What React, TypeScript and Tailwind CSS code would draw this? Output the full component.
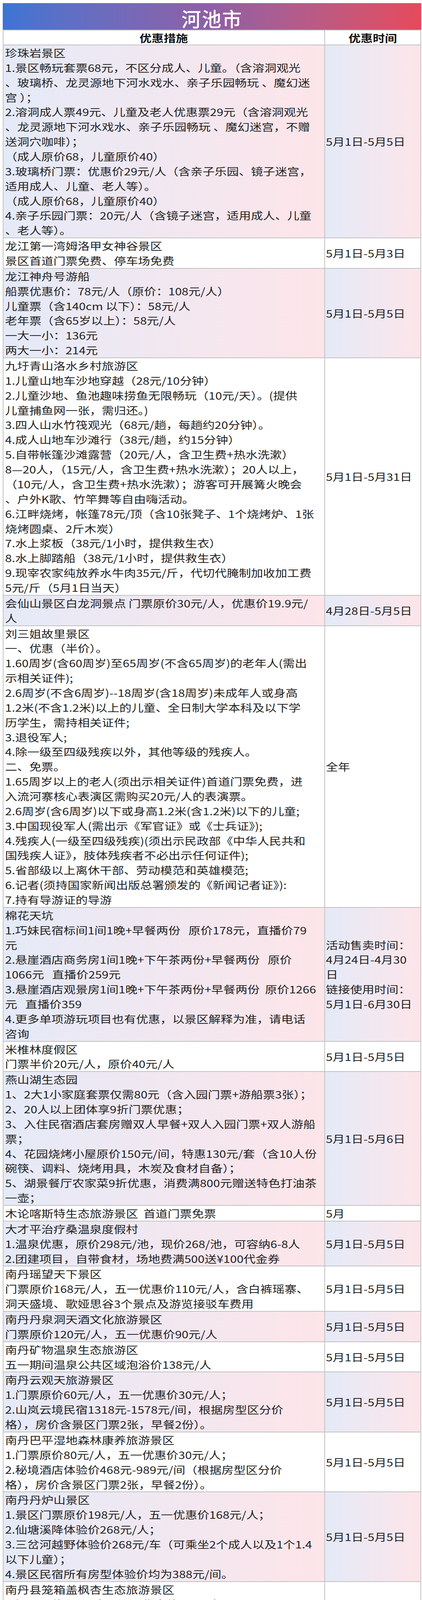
import React from 'react';

type Row = { lines: string[]; date: string[] };

const D5 = ['5月1日-5月5日'];

const rows: Row[] = [
  {
    lines: [
      '珍珠岩景区',
      '1.景区畅玩套票68元，不区分成人、儿童。（含溶洞观光',
      '、玻璃桥、龙灵源地下河水戏水、亲子乐园畅玩 、魔幻迷',
      '宫 ）；',
      '2.溶洞成人票49元、儿童及老人优惠票29元（含溶洞观光',
      '、龙灵源地下河水戏水、亲子乐园畅玩 、魔幻迷宫，不赠',
      '送洞穴咖啡）；',
      '（成人原价68，儿童原价40）',
      '3.玻璃桥门票：优惠价29元/人（含亲子乐园、镜子迷宫，',
      '适用成人、儿童、老人等）。',
      '（成人原价68，儿童原价40）',
      '4.亲子乐园门票：20元/人（含镜子迷宫，适用成人、儿童',
      '、老人等）。',
    ],
    date: D5,
  },
  {
    lines: ['龙江第一湾姆洛甲女神谷景区', '景区首道门票免费、停车场免费'],
    date: ['5月1日-5月3日'],
  },
  {
    lines: [
      '龙江神舟号游船',
      '船票优惠价：78元/人（原价：108元/人）',
      '儿童票（含140cm 以下）：58元/人',
      '老年票（含65岁以上）：58元/人',
      '一大一小：136元',
      '两大一小：214元',
    ],
    date: D5,
  },
  {
    lines: [
      '九圩青山洛水乡村旅游区',
      '1.儿童山地车沙地穿越（28元/10分钟）',
      '2.儿童沙地、鱼池趣味捞鱼无限畅玩（10元/天）。(提供',
      '儿童捕鱼网一张，需归还。)',
      '3.四人山水竹筏观光（68元/趟，每趟约20分钟）。',
      '4.成人山地车沙滩行（38元/趟，约15分钟）',
      '5.自带帐篷沙滩露营（20元/人，含卫生费+热水洗漱）',
      '8—20人，（15元/人，含卫生费+热水洗漱）；20人以上，',
      '（10元/人，含卫生费+热水洗漱）；游客可开展篝火晚会',
      '、户外K歌、竹竿舞等自由嗨活动。',
      '6.江畔烧烤，帐篷78元/顶（含10张凳子、1个烧烤炉、1张',
      '烧烤圆桌、2斤木炭）',
      '7.水上浆板（38元/1小时，提供救生衣）',
      '8.水上脚踏船（38元/1小时，提供救生衣）',
      '9.现宰农家纯放养水牛肉35元/斤，代切代腌制加收加工费',
      '5元/斤（5月1日当天）',
    ],
    date: ['5月1日-5月31日'],
  },
  {
    lines: ['会仙山景区白龙洞景点 门票原价30元/人，优惠价19.9元/', '人'],
    date: ['4月28日-5月5日'],
  },
  {
    lines: [
      '刘三姐故里景区',
      '一、优惠（半价）。',
      '1.60周岁(含60周岁)至65周岁(不含65周岁)的老年人(需出',
      '示相关证件);',
      '2.6周岁(不含6周岁)--18周岁(含18周岁)未成年人或身高',
      '1.2米(不含1.2米)以上的儿童、全日制大学本科及以下学',
      '历学生，需持相关证件;',
      '3.退役军人;',
      '4.除一级至四级残疾以外，其他等级的残疾人。',
      '二、免票。',
      '1.65周岁以上的老人(须出示相关证件)首道门票免费，进',
      '入流河寨核心表演区需购买20元/人的表演票。',
      '2.6周岁(含6周岁)以下或身高1.2米(含1.2米)以下的儿童;',
      '3.中国现役军人(需出示《军官证》或《士兵证》);',
      '4.残疾人(一级至四级残疾)(须出示民政部《中华人民共和',
      '国残疾人证》，肢体残疾者不必出示任何证件);',
      '5.省部级以上离休干部、劳动模范和英雄模范;',
      '6.记者(须持国家新闻出版总署颁发的《新闻记者证》):',
      '7.持有导游证的导游',
    ],
    date: ['全年'],
  },
  {
    lines: [
      '棉花天坑',
      '1.巧妹民宿标间1间1晚+早餐两份   原价178元，直播价79',
      '元',
      '2.悬崖酒店商务房1间1晚+下午茶两份+早餐两份   原价',
      '1066元   直播价259元',
      '3.悬崖酒店观景房1间1晚+下午茶两份+早餐两份  原价1266',
      '元   直播价359',
      '4.更多单项游玩项目也有优惠，以景区解释为准，请电话',
      '咨询',
    ],
    date: ['活动售卖时间：', '4月24日-4月30', '日', '链接使用时间：', '5月1日-6月30日'],
  },
  {
    lines: ['米椎林度假区', '门票半价20元/人，原价40元/人'],
    date: D5,
  },
  {
    lines: [
      '燕山湖生态园',
      '1、2大1小家庭套票仅需80元（含入园门票+游船票3张）；',
      '2、20人以上团体享9折门票优惠；',
      '3、入住民宿酒店套房赠双人早餐+双人入园门票+双人游船',
      '票；',
      '4、花园烧烤小屋原价150元/间，特惠130元/套（含10人份',
      '碗筷、调料、烧烤用具，木炭及食材自备）；',
      '5、湖景餐厅农家菜9折优惠，消费满800元赠送特色打油茶',
      '一壶；',
    ],
    date: ['5月1日-5月6日'],
  },
  {
    lines: ['木论喀斯特生态旅游景区  首道门票免票'],
    date: ['5月'],
  },
  {
    lines: [
      '大才平治疗桑温泉度假村',
      '1.温泉优惠，原价298元/池，现价268/池，可容纳6-8人',
      '2.团建项目，自带食材，场地费满500送¥100代金券',
    ],
    date: D5,
  },
  {
    lines: [
      '南丹瑶望天下景区',
      '门票原价168元/人，五一优惠价110元/人，含白裤瑶寨、',
      '洞天盛境、歌娅思谷3个景点及游览接驳车费用',
    ],
    date: D5,
  },
  {
    lines: ['南丹丹泉洞天酒文化旅游景区', '门票原价120元/人，五一优惠价90元/人'],
    date: D5,
  },
  {
    lines: ['南丹矿物温泉生态旅游区', '五一期间温泉公共区域泡浴价138元/人'],
    date: D5,
  },
  {
    lines: [
      '南丹云观天旅游景区',
      '1.门票原价60元/人，五一优惠价30元/人；',
      '2.山岚云境民宿1318元-1578元/间，根据房型区分价',
      '格），房价含景区门票2张，早餐2份）。',
    ],
    date: D5,
  },
  {
    lines: [
      '南丹巴平湿地森林康养旅游景区',
      '1.门票原价80元/人，五一优惠价30元/人；',
      '2.秘境酒店体验价468元-989元/间（根据房型区分价',
      '格），房价含景区门票2张，早餐2份）。',
    ],
    date: D5,
  },
  {
    lines: [
      '南丹丹炉山景区',
      '1.景区门票原价198元/人，五一优惠价168元/人；',
      '2.仙塘溪降体验价268元/人；',
      '3.三岔河越野体验价268元/车（可乘坐2个成人以及1个1.4',
      '以下儿童）；',
      '4.景区民宿所有房型体验价均为388元/间。',
    ],
    date: D5,
  },
  {
    lines: [
      '南丹县笼箱盖枫杏生态旅游景区',
      '1.门票原价80元/人，五一优惠价40元/人',
      '2.彩虹滑道39元/人次，买一送一；小火车10元/人次，轨',
      '道小火车20元/人次（凭门票可赠轨道小火车一次），儿童',
      '沙滩车20元/人次；全地形越野车3公里路线188元/辆全程',
      '40分钟；',
      '3.民宿住宿超值优惠：标间大床房原价288元/间，现优惠',
      '价268元/元间，双床房原价368元/间，现优惠价318元',
      '/间，三床房原价418元/间，现优惠价368元/间。',
    ],
    date: D5,
  },
  {
    lines: [
      '南丹县蛮降农耕旅游景区',
      '1.门票原价150元/人，现南丹籍、荔波籍游客30元/人，其',
      '他户籍游客50元/人（凭身份证入园）；',
      '2.景区民宿体验价450元--1450元/间（根据房型区分价',
      '格）。',
    ],
    date: D5,
  },
  {
    lines: [
      '云岭梦乡露营地',
      '门票优惠：全票价40元/人，限时优惠价20元/人。帐篷优',
      '惠：1.梦园1号帐篷 原价1098元，活动价898元；2.梦园2',
      '号帐篷 原价898元，活动价698元；3.印第安大草帽 原价',
      '798元，活动价598元；4.A区帐篷套餐 原价598元，活动价',
      '398元；5.B区帐篷套餐 原价498元，活动价298元',
    ],
    date: ['全年'],
  },
  {
    lines: [
      '天龙大峡谷',
      '2025年4月8日——6月30日，针对广东省户籍居民推出首道',
      '门票至少免费1次优惠。',
    ],
    date: ['4月8日-6月30日'],
  },
  {
    lines: [
      '长乐宫名胜风景区',
      '原价：180/张，优惠价：90元/张，折后买三送一，凭门票',
      '参与抽奖活动。（仅限当天有效）',
    ],
    date: D5,
  },
  {
    lines: [
      '红水河第一湾景区',
      '原价：128/张，优惠价：60元/张，折后买三送一，凭门票',
      '参与抽奖活动。（仅限当天有效）',
    ],
    date: D5,
  },
  {
    lines: [
      '香河漂流景区',
      '原价：180/张，优惠价：90元/张，折后买三送一，凭门票',
      '参与抽奖活动。（仅限当天有效）',
    ],
    date: D5,
  },
  {
    lines: [
      '坡豪露营地',
      '太空舱和圆顶帐篷打7折优惠；二层酒店帐篷和三角帐篷享',
      '受5折优惠。',
    ],
    date: D5,
  },
  {
    lines: ['巴马赐福湖游船+长寿岛景区门票，39元/人'],
    date: ['5月1日-5月7日'],
  },
  {
    lines: ['巴马水晶宫抖音及快手平台抢购51元门票，限300张'],
    date: ['5月1日-5月7日'],
  },
  {
    lines: [
      '巴马仁寿源景区',
      '1. 致敬劳动者：医护人员、教师、消防员、现役军人、警',
      '察凭有效证件免费入园（日场）；',
      '2.仁寿源参观(日场不含餐)51元/人，美团、携程、抖音凭',
      '身份证下单，2025年5月30日前可使用   。',
    ],
    date: ['5月1日-5月3日'],
  },
  {
    lines: ['凤山县鸳鸯洞景区', '门票优惠，门市价88元/人，优惠价49.9元/人。'],
    date: D5,
  },
  {
    lines: [
      '凤山县万寿谷景区',
      '门票折中折，原价188元，售价98元，节日78元（广西身份',
      '证）',
    ],
    date: ['5月1日-5月15日'],
  },
  {
    lines: [
      '大化奇美水城景区奇石馆门票优惠：',
      '奇石馆门票（成人票）原售价68元/人，现网络销售价及线',
      '下销售价优惠至20元/人。',
      '线下门票团购优惠：购满5张门票赠送1张门票；购满8张门',
      '票赠送2张门票；购满10张门票赠送3张门票。',
    ],
    date: D5,
  },
  {
    lines: [
      '大化红水河百里风情画廊贡川情人湾旅游区',
      '预订民宿、露营营位送超值“大礼包”；',
      '单人皮划艇20元/艘；',
      '双人皮划艇30元/艘；',
      '水上浆板20元/艘；',
      '野炊营位168元/套；',
      '单人摩托艇70元/次；',
      '电动家庭船120元/艘；',
      '真人CS（水弹）10元/次；',
      '窑鸡位58元/个；',
      '集装箱综合团建区500元起包场；',
      '三角帐篷（标配）128元/套；',
      '七贤居民宿399元/套；',
      '蔷薇院民宿399元/套；',
      '听蕉筑民宿499元/套；',
      '如院500元包场/次；',
      '草帽帐营位269元/套。',
    ],
    date: D5,
  },
  {
    lines: [
      '大化红水河一东盟国际垂钓基地',
      '乐享山水游景区活动：预定露营场地，即可免费使用烧烤',
      '炉1套（含烧烤炉和2斤木炭）。',
      '场地特惠价为露营场地98元/晚；烧烤位88元/晚。',
      '酒店入住特惠价活动：活动期间，所有入住酒店的客户，',
      '均可享受酒店特惠价。垂钓基地酒店豪华单人房178元/间',
      '（含早）；豪华双人房198元/间（含早）；豪华三人房206',
      '元/间（含早）；豪华双人套房268元/间（含早）。帐篷酒',
      '店豪华单人房218元/间（含早）；豪华双人房218元/间',
      '（含早）。',
    ],
    date: D5,
  },
];

// the source table is stretched sideways, so each line is widened to match
const Line = ({ text }: { text: string }) => (
  <div className="h-[37.87px] w-fit origin-left scale-x-[1.19] whitespace-pre">{text}</div>
);

const TableRow = ({ row, shaded }: { row: Row; shaded: boolean }) => {
  const bg = shaded ? 'bg-linear-to-r from-[#e5eaf8] to-[#fde5e9]' : 'bg-white';
  return (
    <div className="grid grid-cols-[823px_1fr] border-x-2 border-b-2 border-[#c2c2c2]">
      <div className={`${bg} min-w-0 border-r-2 border-[#c2c2c2] pl-[4px]`}>
        {row.lines.map((t, i) => (
          <Line key={i} text={t} />
        ))}
      </div>
      <div className={`${bg} flex min-w-0 flex-col justify-center pl-[2px]`}>
        {row.date.map((t, i) => (
          <Line key={i} text={t} />
        ))}
      </div>
    </div>
  );
};

export default function App() {
  return (
    <div
      className="h-[7082px] w-full overflow-hidden bg-white pt-[8px] pl-[7px] text-[26px] leading-[37.87px] text-[#222]"
      style={{ fontFamily: '"Noto Sans CJK SC", "Noto Sans", sans-serif' }}
    >
      <div className="w-[1071px]">
        <div className="flex h-[70px] items-center justify-center border-b-2 border-[#c2c2c2] bg-linear-to-r from-[#3c74d4] via-[#8f5fa5] to-[#e6495b]">
          <span className="pt-[8px] text-[50px] font-medium leading-none tracking-[2px] text-white">
            河池市
          </span>
        </div>
        <div className="grid h-[38px] grid-cols-[823px_1fr] border-x-2 border-b-2 border-[#c2c2c2] bg-white font-bold text-[#111]">
          <div className="flex items-center justify-center border-r-2 border-[#c2c2c2]">
            <span className="inline-block scale-x-[1.19]">优惠措施</span>
          </div>
          <div className="flex items-center justify-center">
            <span className="inline-block scale-x-[1.19]">优惠时间</span>
          </div>
        </div>
        {rows.map((r, i) => (
          <TableRow key={i} row={r} shaded={i % 2 === 0} />
        ))}
      </div>
    </div>
  );
}
